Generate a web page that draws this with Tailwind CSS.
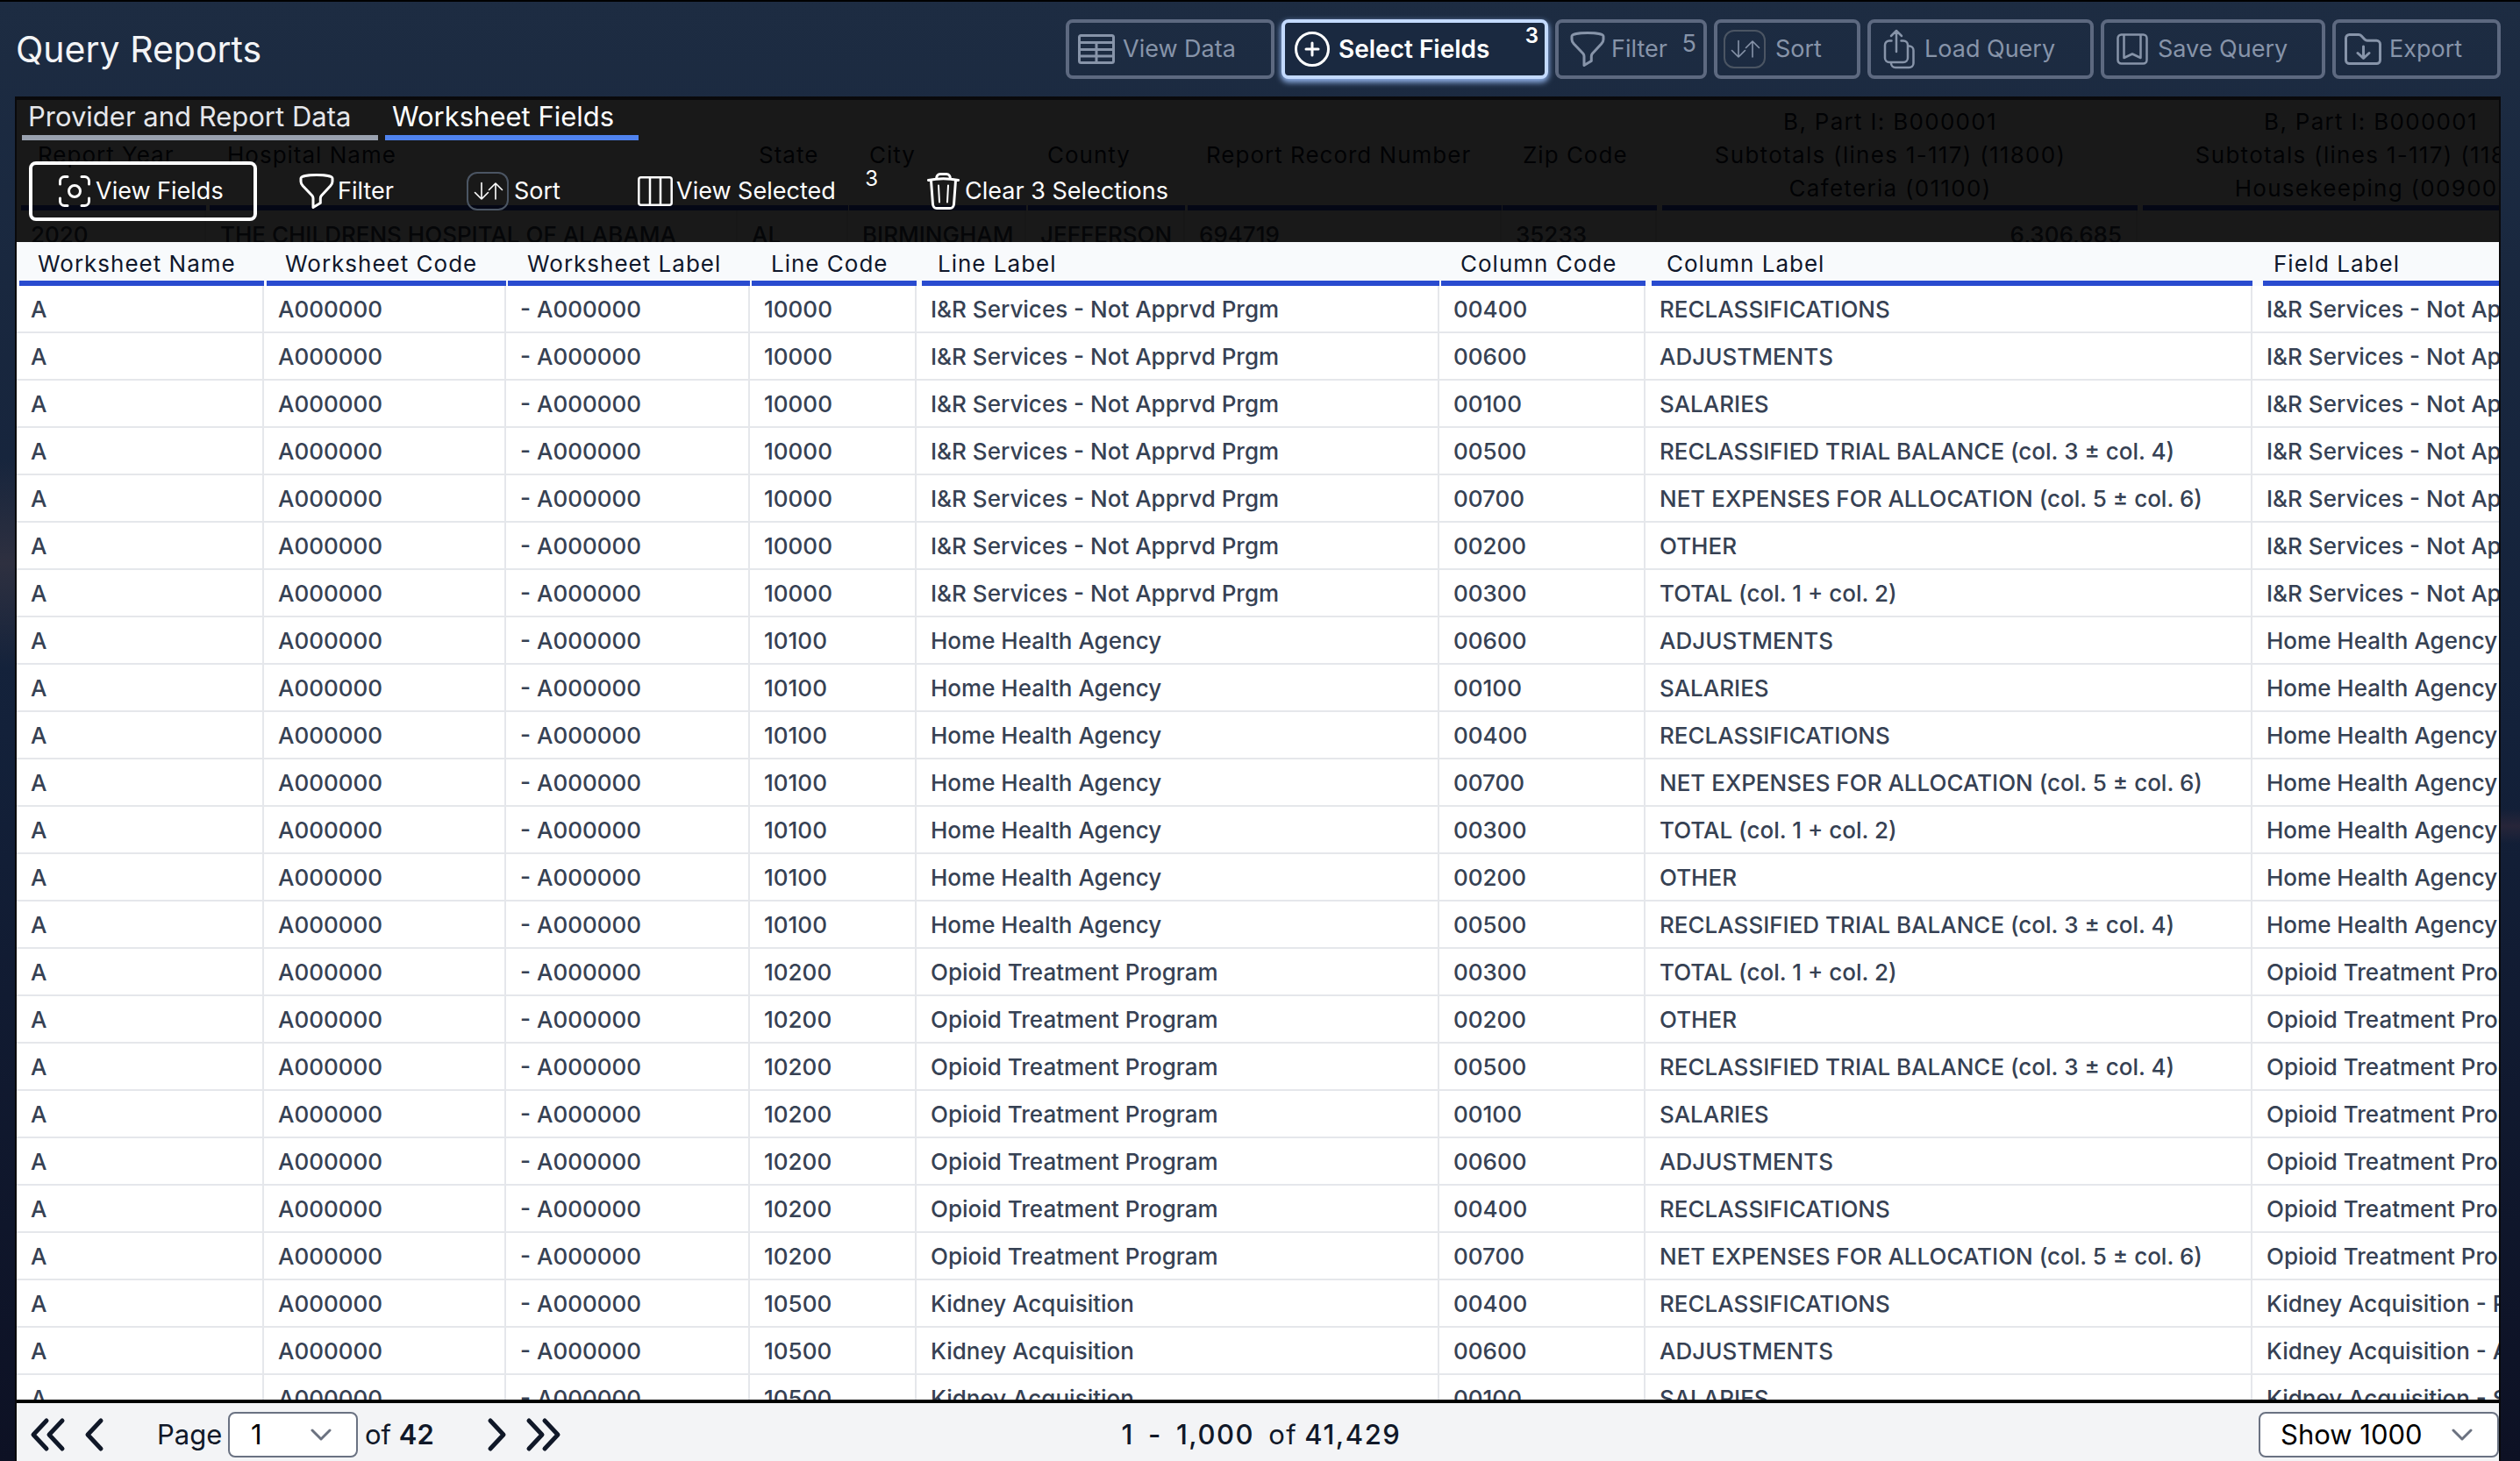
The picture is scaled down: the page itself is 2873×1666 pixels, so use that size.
<!DOCTYPE html>
<html lang="en">
<head>
<meta charset="utf-8" />
<title>Query Reports</title>
<meta name="viewport" content="width=device-width, initial-scale=1" />
<script src="https://cdn.jsdelivr.net/npm/@tailwindcss/browser@4"></script>
</head>

<body class="relative h-screen overflow-hidden flex flex-col border-t-2 border-black bg-linear-to-b from-[#1d2c42] via-[#13213a] to-[#0d1124] font-['Inter',sans-serif]">
<!-- shared icons -->
<svg class="hidden">
  <symbol id="i-filter" viewBox="0 0 40 40">
    <path d="M2 5.500C2 3 10 1.600 20 1.600S38 3 38 5.500V9c0 2-1 3.500-2.300 5L25.500 25c-.8 1-1.200 2-1.200 3.200v5.300L16 38.500V28.200c0-1.200-.4-2.200-1.200-3.200L4.300 14C3 12.500 2 11 2 9Z" fill="none" stroke="currentColor" stroke-width="3" stroke-linejoin="round" />
  </symbol>
  <symbol id="i-sort" viewBox="0 0 48 44">
    <rect x="1" y="1" width="46" height="42" rx="11" fill="none" stroke="#4b5563" stroke-width="2" />
    <path d="M17 12.500V31M9.500 23.500 17 31l7.500-7.500M33 31V13M25.500 20.500 33 13l7.500 7.500" fill="none" stroke="currentColor" stroke-width="1.600" stroke-linecap="round" stroke-linejoin="round" />
  </symbol>
  <symbol id="i-down" viewBox="0 0 24 14">
    <path d="m2 2 10 10L22 2" fill="none" stroke="#6b7280" stroke-width="3" stroke-linecap="round" stroke-linejoin="round" />
  </symbol>
</svg>

<!-- dusk glow at the window edges -->
<div class="absolute left-0 top-[520px] w-6 h-60 bg-linear-to-b from-transparent via-[#2e3040] to-transparent"></div>
<div class="absolute right-0 top-[920px] w-6 h-10 bg-linear-to-b from-transparent via-[#272539] to-transparent"></div>

<header class="h-[108px] shrink-0 flex justify-between items-center pl-[18px] pr-[22px]">
  <h1 class="text-[41px] leading-[48px] text-gray-100">Query Reports</h1>
  <nav class="flex gap-2 text-[27px] text-[#8794a9]">
    <button class="flex items-center w-[238px] h-[68px] pl-[10px] gap-[9px] border-4 border-[#5d6980] rounded-lg">
      <svg class="w-[42px] h-[34px]" viewBox="0 0 42 34" fill="none" stroke="currentColor" stroke-width="3">
        <rect x="1.500" y="1.500" width="39" height="31" rx="2" /><path d="M1 9.500h40M1 17.500h40M1 25h40M21 9.500V33" />
      </svg>
      <span>View Data</span>
    </button>
    <button class="flex items-center w-[304px] h-[68px] pl-[11px] gap-[10px] border-4 border-[#c3dafe] rounded-lg shadow-[0_3px_6px_1px_#8fb0e6] bg-[#1a2940] text-white font-semibold">
      <svg class="w-10 h-10" viewBox="0 0 40 40" fill="none" stroke="currentColor" stroke-width="3" stroke-linecap="round">
        <circle cx="20" cy="20" r="18.500" /><path d="M20 13v14M13 20h14" />
      </svg>
      <span class="text-[28px]">Select Fields</span>
      <sup class="ml-auto mr-[7px] mb-[30px] text-2xl leading-6 top-0">3</sup>
    </button>
    <button class="flex items-center w-[173px] h-[68px] pl-[13px] gap-[7px] border-4 border-[#5d6980] rounded-lg">
      <svg class="w-10 h-10"><use href="#i-filter" /></svg>
      <span>Filter</span>
      <sup class="ml-auto mr-[8px] mb-3 text-[27px] leading-6 top-0">5</sup>
    </button>
    <button class="flex items-center w-[167px] h-[68px] pl-[7px] gap-[11px] border-4 border-[#5d6980] rounded-lg">
      <svg class="w-12 h-11"><use href="#i-sort" /></svg>
      <span>Sort</span>
    </button>
    <button class="flex items-center w-[258px] h-[68px] pl-[14px] gap-[11px] border-4 border-[#5d6980] rounded-lg">
      <svg class="w-9 h-[46px]" viewBox="0 0 36 46" fill="none" stroke="currentColor" stroke-width="2.500" stroke-linecap="round" stroke-linejoin="round">
        <path d="M9.500 13.500H7a5 5 0 0 0-5 5V33a5 5 0 0 0 5 5h16a5 5 0 0 0 5-5V18.500a5 5 0 0 0-5-5h-2.500M15 26V2M9 8l6-6 6 6M28 19.500h1.500a5 5 0 0 1 5 5V39a5 5 0 0 1-5 5H14a5 5 0 0 1-5-5v-1" />
      </svg>
      <span>Load Query</span>
    </button>
    <button class="flex items-center w-[256px] h-[68px] pl-[14px] gap-[11px] border-4 border-[#5d6980] rounded-lg">
      <svg class="w-9 h-9" viewBox="0 0 36 36" fill="none" stroke="currentColor" stroke-width="2.500" stroke-linejoin="round">
        <rect x="1.500" y="1.500" width="33" height="33" rx="4" /><path d="M8.500 2v26l9.500-4.500 9.500 4.500V2" />
      </svg>
      <span>Save Query</span>
    </button>
    <button class="flex items-center w-[192px] h-[68px] pl-[10px] gap-[9px] border-4 border-[#5d6980] rounded-lg">
      <svg class="w-[42px] h-9" viewBox="0 0 42 36" fill="none" stroke="currentColor" stroke-width="3" stroke-linecap="round" stroke-linejoin="round">
        <path d="M1.500 5.500a4 4 0 0 1 4-4h10.500a4 4 0 0 1 3 1.300l4 4.200a4 4 0 0 0 3 1.300h10.500a4 4 0 0 1 4 4V30.500a4 4 0 0 1-4 4h-31a4 4 0 0 1-4-4ZM21.500 15v13M15 22.500l6.500 6 6.500-6" />
      </svg>
      <span>Export</span>
    </button>
  </nav>
</header>

<main class="relative flex-1 min-h-0 ml-[17px] mr-[22px] flex flex-col border-x-2 border-t-4 border-[#09090b] bg-white overflow-hidden">
  <!-- report table under the dark sheet -->
  <div class="absolute inset-x-0 top-0 overflow-hidden">
    <table class="table-fixed border-separate border-spacing-0 w-[2966px] text-[26px]">
      <colgroup id="report-cols"></colgroup>
      <thead><tr id="report-head" class="text-slate-900"></tr></thead>
      <tbody><tr id="report-row" class="text-gray-700 font-medium"></tr></tbody>
    </table>
  </div>

  <div class="relative shrink-0 bg-black/90 text-white">
    <div class="flex gap-2 pl-[6px] text-[31px] leading-[38px]">
      <button class="w-[406px] pl-[7px] pb-[2px] text-left border-b-6 border-gray-400 text-gray-200">Provider and Report Data</button>
      <button class="w-[289px] pl-[8px] pb-[2px] text-left border-b-6 border-[#4f82ee]">Worksheet Fields</button>
    </div>
    <div class="flex py-6 pl-[14px] text-[27px]">
      <button class="flex items-center w-[260px] h-[68px] pl-[30px] gap-[6px] mr-12 border-4 border-white rounded-lg">
        <svg class="w-9 h-9" viewBox="0 0 36 36" fill="none" stroke="currentColor" stroke-width="3" stroke-linecap="round">
          <path d="M1.500 10V6.500a5 5 0 0 1 5-5H10M26 1.500h3.500a5 5 0 0 1 5 5V10M34.500 26v3.500a5 5 0 0 1-5 5H26M10 34.500H6.500a5 5 0 0 1-5-5V26" /><circle cx="18" cy="18" r="6.500" />
        </svg>
        <span>View Fields</span>
      </button>
      <button class="flex items-center w-[191px] gap-[4px]">
        <svg class="w-10 h-10"><use href="#i-filter" /></svg>
        <span>Filter</span>
      </button>
      <button class="flex items-center w-[195px] gap-[6px]">
        <svg class="w-12 h-11"><use href="#i-sort" /></svg>
        <span>Sort</span>
      </button>
      <button class="flex items-center w-[330px] gap-[4px]">
        <svg class="w-10 h-[34px]" viewBox="0 0 40 34" fill="none" stroke="currentColor" stroke-width="2.500">
          <rect x="1.300" y="1.300" width="37.400" height="31.400" rx="2.500" /><path d="M14 1v32M26 1v32" />
        </svg>
        <span>View Selected</span>
        <sup class="ml-auto mr-[56px] mb-7 text-2xl leading-6 top-0">3</sup>
      </button>
      <button class="flex items-center gap-[6px]">
        <svg class="w-[37px] h-[42px]" viewBox="0 0 37 42" fill="none" stroke="currentColor" stroke-width="3" stroke-linecap="round" stroke-linejoin="round">
          <path d="M1.500 8.500Q18.500 5 35.500 8.500M10.500 7c0-3.500 2-5.500 4.500-5.500h7c2.500 0 4.500 2 4.500 5.500M4.500 9l2 27c.2 2.500 2 4.500 4.500 4.500h15c2.500 0 4.300-2 4.500-4.500l2-27" /><path d="M13 14.500l1 19M24 14.500l-1 19" stroke-width="2" />
        </svg>
        <span>Clear 3 Selections</span>
      </button>
    </div>
  </div>

  <div class="relative flex-1 min-h-0 overflow-hidden bg-white">
    <table class="table-fixed border-separate border-spacing-0 w-[3200px] text-[26px]">
      <colgroup id="field-cols"></colgroup>
      <thead><tr id="field-head" class="bg-slate-50 text-slate-900"></tr></thead>
      <tbody id="field-rows" class="text-gray-700 font-medium"></tbody>
    </table>
  </div>

  <footer class="relative shrink-0 h-[70px] grid grid-cols-[1fr_auto_1fr] items-center pt-[10px] pb-1 border-t-4 border-black bg-gray-100 text-[31px] text-gray-900">
    <div class="flex items-center">
      <button class="ml-[14px]" aria-label="First page">
        <svg class="w-[44px] h-10" viewBox="0 0 44 40" fill="none" stroke="currentColor" stroke-width="5" stroke-linecap="round" stroke-linejoin="round"><path d="M20 4 5 20l15 16M38 4 23 20l15 16" /></svg>
      </button>
      <button class="ml-[18px]" aria-label="Previous page">
        <svg class="w-[26px] h-10" viewBox="0 0 26 40" fill="none" stroke="currentColor" stroke-width="5" stroke-linecap="round" stroke-linejoin="round"><path d="M20 4 5 20l15 16" /></svg>
      </button>
      <label for="page" class="ml-[58px] w-[81px]">Page</label>
      <div class="relative">
        <select id="page" class="appearance-none w-[148px] h-[52px] pl-[24px] border-2 border-gray-500 rounded-lg bg-white text-black"><option>1</option></select>
        <svg class="absolute right-[30px] top-[19px] w-6 h-[14px] pointer-events-none"><use href="#i-down" /></svg>
      </div>
      <p class="ml-2">of <b class="font-semibold">42</b></p>
      <button class="ml-[58px]" aria-label="Next page">
        <svg class="w-[26px] h-10" viewBox="0 0 26 40" fill="none" stroke="currentColor" stroke-width="5" stroke-linecap="round" stroke-linejoin="round"><path d="m6 4 15 16L6 36" /></svg>
      </button>
      <button class="ml-[18px]" aria-label="Last page">
        <svg class="w-[44px] h-10" viewBox="0 0 44 40" fill="none" stroke="currentColor" stroke-width="5" stroke-linecap="round" stroke-linejoin="round"><path d="m6 4 15 16L6 36M24 4l15 16-15 16" /></svg>
      </button>
    </div>
    <p class="flex pl-2 tracking-wider font-medium">
      <span>1</span><span class="mx-4">-</span><span>1,000</span><span class="ml-4 mr-2 font-normal">of</span><span>41,429</span>
    </p>
    <div class="relative justify-self-end">
      <select aria-label="Rows per page" class="appearance-none w-[274px] h-[52px] pl-[23px] border-2 border-gray-500 rounded-lg bg-white text-black"><option>Show 1000</option></select>
      <svg class="absolute right-[30px] top-[19px] w-6 h-[14px] pointer-events-none"><use href="#i-down" /></svg>
    </div>
  </footer>
</main>

<script>
  const $ = (id) => document.getElementById(id);
  const cols = (widths) => widths.map((w) => `<col style="width:${w}px">`).join("");

  // label, width, gap before the blue rule
  const fieldCols = [
    ["Worksheet Name", 282, 3], ["Worksheet Code", 276, 3], ["Worksheet Label", 278, 2], ["Line Code", 190, 2],
    ["Line Label", 596, 6], ["Column Code", 235, 2], ["Column Label", 692, 7], ["Field Label", 651, 12],
  ];
  const reportCols = [
    ["Report Year", 216, 5], ["Hospital Name", 606, 4], ["State", 126, 0], ["City", 203, 1], ["County", 181, 2],
    ["Report Record Number", 361, 3], ["Zip Code", 177, 1],
    ["B, Part I: B000001<br>Subtotals (lines 1-117) (11800)<br>Cafeteria (01100)", 548, 6],
    ["B, Part I: B000001<br>Subtotals (lines 1-117) (11800)<br>Housekeeping (00900)", 548, 6],
  ];
  const reportRow = ["2020", "THE CHILDRENS HOSPITAL OF ALABAMA", "AL", "BIRMINGHAM", "JEFFERSON", "694719", "35233", "6,306,685", ""];

  $("field-cols").innerHTML = cols(fieldCols.map((c) => c[1]));
  $("report-cols").innerHTML = cols(reportCols.map((c) => c[1]));

  $("field-head").innerHTML = fieldCols.map(([label, , gap]) => `
    <th class="p-0 text-left font-normal tracking-[1px]">
      <div class="pt-[6px] pl-6 leading-[38px] whitespace-nowrap">${label}</div>
      <div class="h-[6px] bg-[#294bcf]" style="margin-left:${gap}px"></div>
    </th>`).join("");

  $("report-head").innerHTML = reportCols.map(([label, , gap]) => `
    <th class="p-0 text-left font-normal">
      <div class="flex items-center h-[120px] pt-[6px] leading-[38px] whitespace-nowrap ${label.includes("<br>") ? "justify-center pr-4 text-center tracking-wider" : "pl-6 tracking-[1px]"}"><span>${label}</span></div>
      <div class="h-[6px] bg-[#294bcf]" style="margin-left:${gap}px"></div>
    </th>`).join("");
  $("report-row").innerHTML = reportRow.map((v, i) => `
    <td class="h-[54px] py-0 px-4 border-r-2 border-gray-200 whitespace-nowrap ${i > 6 ? "text-right" : ""}">${v}</td>`).join("");

  const columns = {
    "00100": "SALARIES",
    "00200": "OTHER",
    "00300": "TOTAL (col. 1 + col. 2)",
    "00400": "RECLASSIFICATIONS",
    "00500": "RECLASSIFIED TRIAL BALANCE (col. 3 ± col. 4)",
    "00600": "ADJUSTMENTS",
    "00700": "NET EXPENSES FOR ALLOCATION (col. 5 ± col. 6)",
  };
  const lines = [
    ["10000", "I&amp;R Services - Not Apprvd Prgm", ["00400", "00600", "00100", "00500", "00700", "00200", "00300"]],
    ["10100", "Home Health Agency", ["00600", "00100", "00400", "00700", "00300", "00200", "00500"]],
    ["10200", "Opioid Treatment Program", ["00300", "00200", "00500", "00100", "00600", "00400", "00700"]],
    ["10500", "Kidney Acquisition", ["00400", "00600", "00100"]],
  ];
  $("field-rows").innerHTML = lines.flatMap(([code, label, codes]) => codes.map((c) => {
    const cells = ["A", "A000000", "- A000000", code, label, c, columns[c], `${label} - ${columns[c]}`];
    return `<tr>${cells.map((v) => `<td class="h-[54px] py-0 px-4 border-r-2 border-b-2 border-gray-200 whitespace-nowrap">${v}</td>`).join("")}</tr>`;
  })).join("");
</script>
</body>
</html>
